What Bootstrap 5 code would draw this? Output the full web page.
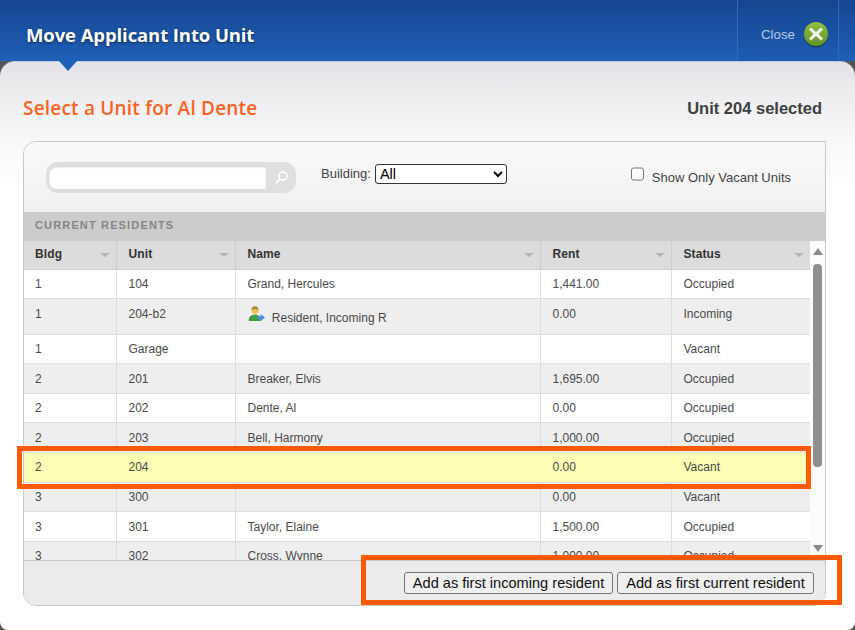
<!DOCTYPE html>
<html lang="en"><head><meta charset="utf-8"><title>Move Applicant Into Unit</title>
<link href="https://cdn.jsdelivr.net/npm/bootstrap@5.3.0/dist/css/bootstrap.min.css" rel="stylesheet">
<style>
html,body{height:630px;overflow:hidden;background:#555;}
body{font-family:"Liberation Sans",Arial,sans-serif;position:relative;}
.dlg-head{height:61px;background:linear-gradient(#17458f,#1f60b8);padding-left:26px;}
.dlg-title{font-family:"Open Sans","DejaVu Sans",sans-serif;font-weight:700;font-size:18.5px;color:#fff;text-shadow:0 1px 3px rgba(0,0,0,.55);margin:0;line-height:1;letter-spacing:-.1px;padding-top:10px;}
.close-tab{width:102px;height:61px;margin-right:16px;border-left:1px solid #2a6cc4;border-right:1px solid #2a6cc4;background:linear-gradient(#17458f,#1d5cb3);color:#b4cbe9;font-size:13.3px;padding:8px 0 0 23px;gap:9px;}
.dlg-body{height:569px;background:linear-gradient(#e3e3e7 0,#f2f2f4 50px,#f9f9fa 85px,#fff 130px);border-radius:15px 15px 8px 8px;position:relative;padding:0 29px 0 23px;border-top:1px solid #b9cbe6;}
.pointer{position:absolute;left:59px;top:-1px;width:0;height:0;border-left:9px solid transparent;border-right:9px solid transparent;border-top:10px solid #1f60b8;}
.sel-row{height:79px;padding:14px 4px 0 0;}
.sel-title{font-family:"Open Sans","DejaVu Sans",sans-serif;font-weight:600;font-size:19px;color:#f96322;margin:0;letter-spacing:.2px;}
.sel-note{font-weight:700;font-size:16.5px;color:#404040;}
.panel-box{height:465px;border:1px solid #c8c8c8;border-radius:13px 0 13px 13px;overflow:hidden;}
.tool-bar{height:70px;background:linear-gradient(#f9f9f9,#f1f1f1);padding:0 34px 0 22px;font-size:13px;color:#444;}
.search-wrap{width:250px;height:31px;border-radius:12px;background:#dfdfdf;padding:4px 3px;}
.search-in{width:217px;height:23px;background:#fff;border:0;border-radius:8px 0 0 8px;box-shadow:inset 0 1px 2px #ccc;}
.search-ic{margin-left:8px;}
.bld-sel{width:132px;height:20px;font-family:"Liberation Sans",Arial,sans-serif;font-size:14.5px;border:1px solid #333;border-radius:3px;background:#fff;color:#000;margin:0 0 6px 4px;padding:0;}
.bld-label{margin:0 0 6px 25px;}
.vac-label{padding-top:1px;}
.chk{width:13px;height:14px;margin:0 8px 0 0;position:relative;top:-4px;}
.sec-bar{height:29px;background:#ccc;color:#868686;font-size:11px;font-weight:700;letter-spacing:1.15px;padding:0 0 2px 11px;}
.tbl-area{height:319px;}
.tbl-clip{width:786px;flex:0 0 786px;height:319px;overflow:hidden;}
.unit-tbl{width:786px;table-layout:fixed;border-collapse:collapse;font-size:12px;color:#4a4a4a;margin:0;}
.unit-tbl col:nth-child(1){width:92px;}
.unit-tbl col:nth-child(2){width:119px;}
.unit-tbl col:nth-child(3){width:305px;}
.unit-tbl col:nth-child(4){width:131px;}
.unit-tbl col:nth-child(5){width:139px;}
.unit-tbl th{height:28px;background:#dcdcdc;color:#333;font-weight:700;padding:0 11px 2px 12px;border-right:1px solid #cfcfcf;border-bottom:1px solid #cfcfcf;position:relative;letter-spacing:.1px;}
.unit-tbl td{padding:0 11px 0 12px;border-right:1px solid #ddd;border-bottom:1px solid #ddd;height:29.6px;vertical-align:middle;}
.unit-tbl th:first-child,.unit-tbl td:first-child{padding-left:11px;}
.unit-tbl th:last-child,.unit-tbl td:last-child{border-right:0;}
.unit-tbl tr.r-w td{background:#fff;}
.unit-tbl tr.r-g td{background:#eee;}
.unit-tbl tr.r-y td{background:#fdfdb4;border-right-color:#fdfdb4;}
.unit-tbl tr.r-tall td{height:35.6px;vertical-align:top;padding-top:6px;}
.unit-tbl tr.r-tall td.nm{padding-top:7px;}
.person-ic{margin-right:4px;vertical-align:0;}
.sort-tri{position:absolute;right:6px;top:12px;width:0;height:0;border-left:5px solid transparent;border-right:5px solid transparent;border-top:4px solid #b4b4b4;}
.scroll-col{background:#fbfbfb;position:relative;}
.sb-up,.sb-dn{position:absolute;left:3px;width:0;height:0;border-left:5px solid transparent;border-right:5px solid transparent;}
.sb-up{top:7px;border-bottom:7px solid #8a8a8a;}
.sb-dn{bottom:8px;border-top:7px solid #8a8a8a;}
.sb-thumb{position:absolute;left:3px;top:23px;width:9px;height:203px;background:#8f8f8f;border-radius:4px;}
.foot-bar{height:45px;background:#ebebeb;border-top:1px solid #c8c8c8;padding:0 11px 0 0;gap:4px;}
.add-btn{height:22px;font-family:"Liberation Sans",Arial,sans-serif;font-size:14.6px;line-height:1;color:#111;background:#efefef;border:1px solid #767676;border-radius:3px;padding:0;}
.add-one{width:209px;}
.add-two{width:197px;}
.mark-a,.mark-b{position:absolute;border:5px solid #ff5a00;pointer-events:none;}
.mark-a{left:17px;top:446px;width:794px;height:43px;}
.mark-b{left:361px;top:555px;width:481px;height:50px;}
</style></head><body>
<div class="dlg-head d-flex align-items-center justify-content-between">
  <h1 class="dlg-title">Move Applicant Into Unit</h1>
  <div class="close-tab d-flex align-items-center"><span>Close</span>
    <svg width="24" height="26" viewBox="0 0 24 26"><defs><linearGradient id="gc" x1="0" y1="0" x2="0" y2="1"><stop offset="0" stop-color="#8fc043"/><stop offset="1" stop-color="#5f9428"/></linearGradient></defs><ellipse cx="12" cy="13.5" rx="12" ry="12" fill="#16320f" opacity=".5"/><circle cx="12" cy="12" r="12" fill="url(#gc)"/><path d="M7 5.5 L12 10 L17 5.5 L19 7.5 L14.5 12 L19 16.5 L17 18.5 L12 14 L7 18.5 L5 16.5 L9.5 12 L5 7.5Z" fill="#f4f8ec"/></svg>
  </div>
</div>
<div class="dlg-body">
  <div class="pointer"></div>
  <div class="sel-row d-flex align-items-center justify-content-between">
    <h2 class="sel-title">Select a Unit for Al Dente</h2>
    <span class="sel-note">Unit 204 selected</span>
  </div>
  <div class="panel-box">
    <div class="tool-bar d-flex align-items-center">
      <div class="search-wrap d-flex align-items-center">
        <input class="search-in" type="text" aria-label="Search">
        <svg class="search-ic" width="15" height="15" viewBox="0 0 15 15"><circle cx="9" cy="6" r="4" fill="none" stroke="#fff" stroke-width="1.6"/><path d="M6 9 L2 13" stroke="#fff" stroke-width="2.2"/></svg>
      </div>
      <span class="bld-label">Building:</span>
      <select class="bld-sel" aria-label="Building"><option>All</option></select>
      <label class="vac-label ms-auto d-flex align-items-center"><input class="chk" type="checkbox">Show Only Vacant Units</label>
    </div>
    <div class="sec-bar d-flex align-items-center">CURRENT RESIDENTS</div>
    <div class="tbl-area d-flex">
      <div class="tbl-clip">
        <table class="unit-tbl">
          <colgroup><col><col><col><col><col></colgroup>
          <thead><tr><th>Bldg<i class="sort-tri"></i></th><th>Unit<i class="sort-tri"></i></th><th>Name<i class="sort-tri"></i></th><th>Rent<i class="sort-tri"></i></th><th>Status<i class="sort-tri"></i></th></tr></thead>
          <tbody>
            <tr class="r-w"><td>1</td><td>104</td><td>Grand, Hercules</td><td>1,441.00</td><td>Occupied</td></tr>
            <tr class="r-g r-tall"><td>1</td><td>204-b2</td><td class="nm"><svg class="person-ic" width="17" height="16" viewBox="0 0 17 16"><circle cx="7" cy="4.5" r="3.4" fill="#e8bf5c"/><path d="M3.4 4 Q3.6 .2 7 .2 Q10.4 .2 10.6 4 Q7 2 3.4 4Z" fill="#a98a2c"/><path d="M.6 15 Q.6 8.4 7 8.4 Q13 8.4 13 15Z" fill="#3f9e3b"/><path d="M9 10.2 L12.6 10.2 L12.6 8 L17 11.6 L12.6 15.2 L12.6 13 L9 13Z" fill="#4a8fdc"/></svg> Resident, Incoming R</td><td>0.00</td><td>Incoming</td></tr>
            <tr class="r-w"><td>1</td><td>Garage</td><td></td><td></td><td>Vacant</td></tr>
            <tr class="r-g"><td>2</td><td>201</td><td>Breaker, Elvis</td><td>1,695.00</td><td>Occupied</td></tr>
            <tr class="r-w"><td>2</td><td>202</td><td>Dente, Al</td><td>0.00</td><td>Occupied</td></tr>
            <tr class="r-g"><td>2</td><td>203</td><td>Bell, Harmony</td><td>1,000.00</td><td>Occupied</td></tr>
            <tr class="r-y"><td>2</td><td>204</td><td></td><td>0.00</td><td>Vacant</td></tr>
            <tr class="r-g"><td>3</td><td>300</td><td></td><td>0.00</td><td>Vacant</td></tr>
            <tr class="r-w"><td>3</td><td>301</td><td>Taylor, Elaine</td><td>1,500.00</td><td>Occupied</td></tr>
            <tr class="r-g"><td>3</td><td>302</td><td>Cross, Wynne</td><td>1,000.00</td><td>Occupied</td></tr>
          </tbody>
        </table>
      </div>
      <div class="scroll-col flex-grow-1"><i class="sb-up"></i><i class="sb-thumb"></i><i class="sb-dn"></i></div>
    </div>
    <div class="foot-bar d-flex align-items-center justify-content-end">
      <button class="add-btn add-one" type="button">Add as first incoming resident</button>
      <button class="add-btn add-two" type="button">Add as first current resident</button>
    </div>
  </div>
</div>
<div class="mark-a"></div>
<div class="mark-b"></div>
</body></html>
